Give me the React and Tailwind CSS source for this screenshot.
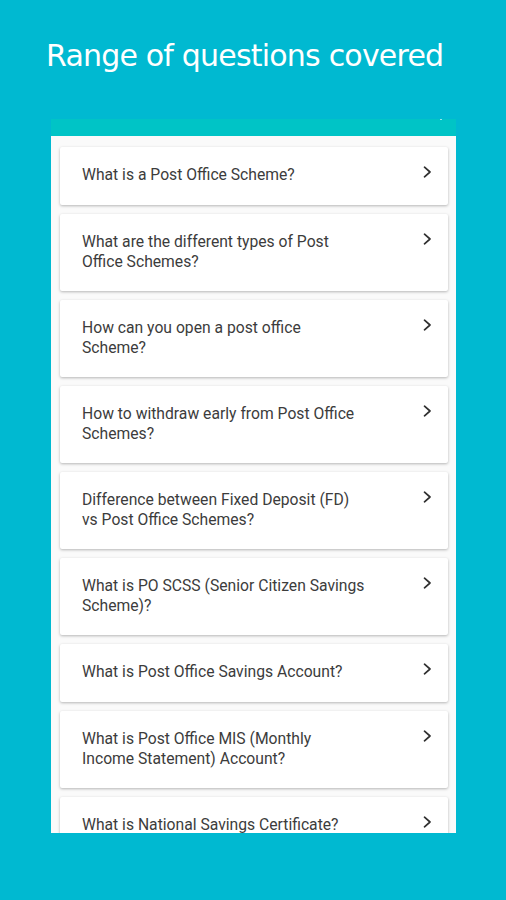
import React from "react";

const items = [
  ["What is a Post Office Scheme?"],
  ["What are the different types of Post", "Office Schemes?"],
  ["How can you open a post office", "Scheme?"],
  ["How to withdraw early from Post Office", "Schemes?"],
  ["Difference between Fixed Deposit (FD)", "vs Post Office Schemes?"],
  ["What is PO SCSS (Senior Citizen Savings", "Scheme)?"],
  ["What is Post Office Savings Account?"],
  ["What is Post Office MIS (Monthly", "Income Statement) Account?"],
  ["What is National Savings Certificate?"],
];

function Chevron() {
  return (
    <svg width="9" height="12" viewBox="0 0 9 12" className="shrink-0">
      <polyline points="1.5,1.2 7,6 1.5,10.8" fill="none" stroke="#2f2f2f" strokeWidth="1.7" strokeLinecap="round" strokeLinejoin="round" />
    </svg>
  );
}

export default function App() {
  return (
    <div className="w-[506px] h-[900px] bg-[#00b9d1] overflow-hidden">
      <div className="pt-[39px] pl-[46px] h-[119px]">
        <h1 className="text-white text-[30px] leading-[34px] tracking-[-0.8px] font-normal" style={{ fontFamily: '"DejaVu Sans", Verdana, sans-serif' }}>
          Range of questions covered
        </h1>
      </div>
      <div className="ml-[51px] w-[405px] h-[714px] flex flex-col overflow-hidden">
        <div className="h-[17px] bg-[#00c4c6] relative shrink-0">
          <div className="absolute right-[14px] top-[-1px] w-[2px] h-[2px] bg-white/80 rounded-full" />
        </div>
        <div className="flex-1 bg-[#fafafa] pl-[9px] pr-[8px] pt-[11px] flex flex-col gap-[9px]">
          {items.map((lines, i) => (
            <div
              key={i}
              className={`bg-white rounded-[2px] shadow-[0_1px_3px_rgba(0,0,0,0.28)] pl-[22px] pr-[16px] pt-[18px] pb-[18px] flex items-start justify-between shrink-0 ${lines.length === 1 ? "h-[58px]" : "h-[77px]"}`}
            >
              <div className="text-[15.7px] leading-[20px] text-[#3c3c3c]" style={{ fontFamily: 'Roboto, "Noto Sans", sans-serif' }}>
                {lines.map((l, j) => (
                  <div key={j} className="whitespace-nowrap">{l}</div>
                ))}
              </div>
              <div className="pt-[1px]">
                <Chevron />
              </div>
            </div>
          ))}
        </div>
      </div>
    </div>
  );
}
